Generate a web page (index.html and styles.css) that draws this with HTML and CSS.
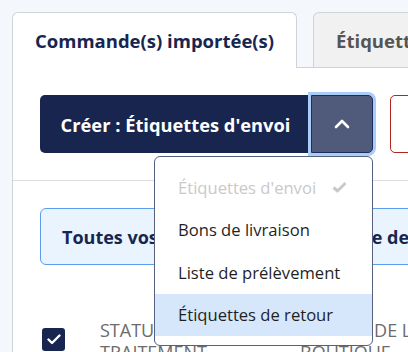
FILE: index.html
```html
<!DOCTYPE html>
<html lang="fr">
<head>
    <meta charset="UTF-8">
    <meta name="viewport" content="width=device-width, initial-scale=1.0">
    <title>Commandes importées</title>
    <link rel="stylesheet" href="styles.css">
</head>
<body>
    <div class="page">
        <div class="tabs">
            <div class="tab active">Commande(s) importée(s)</div>
            <div class="tab">Étiquettes générées</div>
        </div>
        <div class="panel">
            <div class="toolbar">
                <div class="split">
                    <button class="btn-main" type="button">Créer : Étiquettes d'envoi</button>
                    <button class="btn-toggle" type="button">
                        <svg width="16" height="10" viewBox="0 0 16 10"><path d="M2 8 L8 2 L14 8" fill="none" stroke="#fff" stroke-width="2.6" stroke-linecap="round" stroke-linejoin="round"/></svg>
                    </button>
                    <ul class="menu">
                        <li class="disabled">Étiquettes d'envoi
                            <svg class="tick" width="15" height="12" viewBox="0 0 15 12"><path d="M1.5 6.5 L5.5 10 L13.5 2" fill="none" stroke="#c9c9c9" stroke-width="3" stroke-linejoin="round"/></svg>
                        </li>
                        <li>Bons de livraison</li>
                        <li>Liste de prélèvement</li>
                        <li class="hover">Étiquettes de retour</li>
                    </ul>
                </div>
                <button class="btn-danger" type="button">Supprimer</button>
            </div>
            <div class="content">
                <div class="alert">Toutes vos 5 commandes de la page de la liste sont sélectionnées.</div>
                <div class="thead">
                    <span class="check">
                        <svg width="14" height="11" viewBox="0 0 14 11"><path d="M1.5 5.5 L5 9 L12.5 1.5" fill="none" stroke="#fff" stroke-width="2.4" stroke-linecap="round" stroke-linejoin="round"/></svg>
                    </span>
                    <span class="col col-status">Statut de traitement</span>
                    <span class="col col-shop">Source de la boutique</span>
                </div>
            </div>
        </div>
    </div>
</body>
</html>
```

FILE: styles.css
```css
body {
    margin: 0;
    background-color: #f4f8fc;
    font-family: "Open Sans", "Liberation Sans", sans-serif;
    overflow: hidden;
}
.page { padding: 12px 0 0 12px; width: 700px; }

.tabs { display: flex; gap: 16px; border-bottom: 1px solid #cfd3d8; }
.tab {
    height: 54px;
    padding: 0 22px;
    display: flex;
    align-items: center;
    border: 1px solid #cfd3d8;
    border-bottom: none;
    border-radius: 6px 6px 0 0;
    background: #f1f1f1;
    color: #555;
    font-size: 18.5px;
    font-weight: 700;
}
.tab.active {
    background: #fff;
    color: #18264f;
    margin-bottom: -1px;
    height: 55px;
}

.panel { background: #fff; border-left: 1px solid #cfd3d8; min-height: 400px; }

.toolbar {
    display: flex;
    gap: 17px;
    padding: 27px 27px;
    border-bottom: 1px solid #dcdfe3;
}
.split { position: relative; display: flex; }
.btn-main {
    width: 271px;
    height: 58px;
    border: none;
    border-radius: 5px 0 0 5px;
    background: #18264f;
    color: #fff;
    font-family: inherit;
    font-size: 18.3px;
    font-weight: 700;
    padding: 0;
}
.btn-toggle {
    width: 62px;
    height: 58px;
    border: 1px solid #1d2c5c;
    border-radius: 0 5px 5px 0;
    background: #505b7c;
    box-shadow: 0 0 0 3px #aacdf7;
    display: flex;
    align-items: center;
    justify-content: center;
    padding: 0;
}
.btn-danger {
    height: 58px;
    padding: 0 22px;
    border: 1px solid #b3261e;
    border-radius: 5px;
    background: #fff;
    color: #b3261e;
    font-family: inherit;
    font-size: 18px;
    font-weight: 700;
}

.menu {
    position: absolute;
    top: 61px;
    right: 0;
    width: 217px;
    margin: 0;
    padding: 9px 0 9px;
    list-style: none;
    background: #fff;
    border: 1px solid #56607f;
    border-radius: 6px;
    z-index: 2;
}
.menu li {
    height: 42.5px;
    display: flex;
    align-items: center;
    padding: 0 23px;
    font-size: 16.6px;
    color: #1f1f1f;
}
.menu li.disabled { color: #c9c9c9; justify-content: space-between; padding-right: 25px; }
.menu li.hover { background: #d6e7fb; }

.content { padding: 27px 27px; }
.alert {
    height: 55px;
    display: flex;
    align-items: center;
    padding: 0 21px;
    background: #eaf4fe;
    border: 1px solid #5c9ded;
    border-radius: 6px;
    color: #18264f;
    font-size: 18px;
    font-weight: 700;
    white-space: nowrap;
    overflow: hidden;
}

.thead { display: flex; align-items: flex-start; margin-top: 54px; }
.check {
    width: 23px;
    height: 23px;
    margin: 9px 0 0 2px;
    border-radius: 3px;
    background: #18264f;
    display: flex;
    align-items: center;
    justify-content: center;
}
.col {
    text-transform: uppercase;
    color: #6b6b6b;
    font-size: 18px;
    line-height: 22px;
}
.col-status { margin-left: 35px; width: 165px; }
.col-shop { margin-left: 35px; width: 190px; }
```
